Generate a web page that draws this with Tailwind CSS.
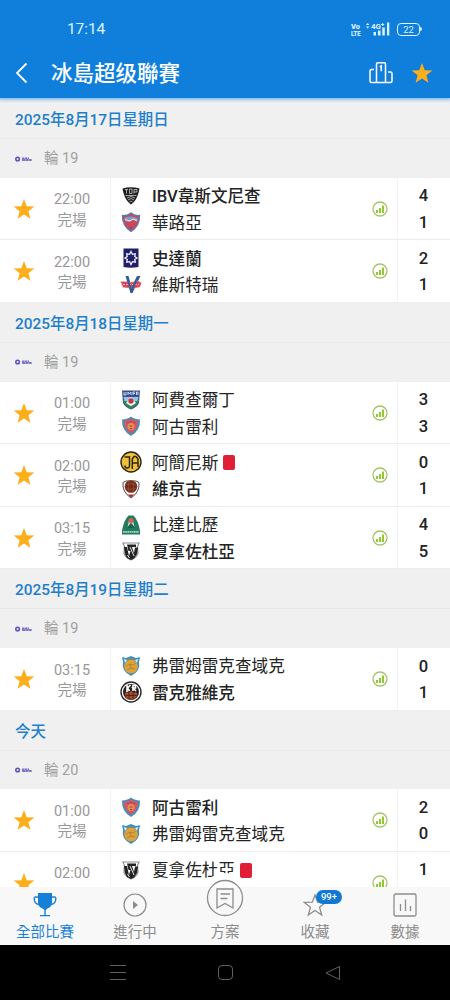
<!DOCTYPE html>
<html lang="zh-Hant">
<head>
    <meta charset="UTF-8">
    <meta name="viewport" content="width=device-width, initial-scale=1.0">
    <title>冰島超级聯賽</title>
    <script src="https://cdn.jsdelivr.net/npm/@tailwindcss/browser@4"></script>
    <style>
        body {
            font-family: Roboto, "Noto Sans CJK SC", sans-serif;
        }
    </style>
</head>
<body class="bg-black">

    <!-- Shared icons and club badges -->
    <svg class="hidden" xmlns="http://www.w3.org/2000/svg">
        <symbol id="star" viewBox="0 0 24 24"><path fill="#fcae1b" d="M12 1l3 7.900 8.300.4-6.500 5.200 2.200 8.100-7-4.600-7 4.600 2.200-8.100L.7 9.300 9 8.900z"/></symbol>
        <symbol id="stats" viewBox="0 0 16 16">
            <circle cx="8" cy="8" r="7" fill="none" stroke="#a3c567" stroke-width="1.300"/>
            <path fill="#8fca32" d="M4 9h2v3H4zM7 7h2v5H7zM10 4.500h2V12h-2z"/>
        </symbol>
        <symbol id="league" viewBox="0 0 17 6">
            <circle cx="2.600" cy="3" r="1.800" fill="none" stroke="#5a4fc0" stroke-width="1.500"/>
            <path stroke="#7d77cb" stroke-width="1.500" stroke-dasharray="2.500 .4" d="M7 2.200h7"/>
            <path stroke="#5a4fc0" stroke-width="1.500" stroke-dasharray="3 .3" d="M7 4h10"/>
        </symbol>
        <symbol id="ibv" viewBox="0 0 22 22">
            <path fill="#1f1f1f" d="M2.500 3.500Q11 1 19.500 3.500q-.5 4-2 7.500Q15 17 11 19.500 7 17 4.500 11q-1.500-3.500-2-7.500z"/>
            <path stroke="#ccc" fill="none" stroke-width=".8" d="M5 4.500h3M6.500 4.500v4M9.500 4v4.500h2.500V4zM14 8.500v-4h3v2.500h-3M5.500 10.500h11M7 13l4-1.500 4 1.500M8 15l3-1.500 3 1.500M9.500 17l1.500-1 1.500 1"/>
        </symbol>
        <symbol id="hualu" viewBox="0 0 22 22">
            <path fill="#d64352" stroke="#5d7ba6" stroke-width="1.300" d="M2.500 4.500Q8 5 11 2q3 3 8.500 2.500.5 10-8.500 16Q2 14.500 2.500 4.500z"/>
            <path fill="#6f9fcd" d="M4 7q7-3 14 .5l-1 3.500-4-2-4 2-4-1z"/>
            <path fill="none" stroke="#f3e4e8" d="M5 8.500l5 1.500 3-2 4 1.500"/>
            <path fill="#4b639b" d="M9 16h4l-2 3z"/>
        </symbol>
        <symbol id="stjarnan" viewBox="0 0 22 22">
            <path fill="#201f68" d="M3.500 1.500h15V20q-7.500 1.500-15 0z"/>
            <path fill="none" stroke="#eef" stroke-width="1.300" d="M11 4.500l1.400 2.800 2.900-.5-.6 2.700L17 11l-2.300 1.500.6 2.700-2.900-.5L11 17.500l-1.400-2.800-2.900.5.6-2.700L5 11l2.300-1.500-.6-2.700 2.900.5z"/>
        </symbol>
        <symbol id="vestri" viewBox="0 0 22 22">
            <path fill="#2d5e96" d="M5.500 2h3l3 11L17 2h3.500l-8 17h-2z"/>
            <path fill="#d8495b" stroke="#f0c4cb" stroke-width=".5" d="M.5 7.500h6l2 1 10-1.500 3 2-1.500 4-6 1.500-6-.5-5-.5z"/>
            <path stroke="#f3ccd3" stroke-width=".8" stroke-dasharray="2 1" d="M3 10.500h16"/>
            <path stroke="#2d5e96" stroke-width="2" fill="none" d="M8 7l3.500 10L16 7"/>
        </symbol>
        <symbol id="umfa" viewBox="0 0 22 22">
            <path fill="#35508d" d="M2 1.500h18L19 14q-2 4-8 6.500Q5 18 3 14z"/>
            <path fill="#318a53" d="M3 11h16q-.5 5-8 9-7.500-4-8-9z"/>
            <path fill="#95c5ea" d="M3.500 8h15l-1 4h-13z"/>
            <path fill="#fff" d="M6 14l5-6 5 6-5 3z"/>
            <circle cx="11" cy="12" r="2.700" fill="#bd3843"/>
            <path stroke="#dce4f3" fill="none" stroke-width=".9" d="M4 3v3h2V3M8 6V3l1.500 2L11 3v3M13 6V3h2M13 4.500h2M16.500 6V3H18v3"/>
        </symbol>
        <symbol id="akureyri" viewBox="0 0 22 22">
            <path fill="#478fb4" d="M2 4.500Q8 4 11 1.500 14 4 20 4.500q.5 11-9 16.500Q1.500 15.500 2 4.500z"/>
            <path fill="#d95563" d="M4 6q4.500-.5 7-2.500Q13.500 5.500 18 6q0 8-7 12.500Q4 14 4 6z"/>
            <circle cx="11" cy="11.500" r="3.500" fill="#e88e46"/>
            <path fill="none" stroke="#7c4775" stroke-width=".9" d="M7 7.500h2M10 6.500h2M13 7.500h2M9.500 11h3M10 13.500h2"/>
        </symbol>
        <symbol id="ia" viewBox="0 0 22 22">
            <circle cx="11" cy="11" r="10" fill="#f0c03a" stroke="#272314" stroke-width="1.400"/>
            <path fill="none" stroke="#2c2714" stroke-width="1.500" d="M4.500 6h5V15q-.3 2-2.300 2t-2.500-2.500M12.300 18V8l1.700-2.500h2L18 8v8M12 12h6"/>
        </symbol>
        <symbol id="vikingur" viewBox="0 0 22 22">
            <path fill="#fff" stroke="#524a4b" d="M3 4.500Q2 14 11 20q9-6 8-15.500L16 3H6z"/>
            <path fill="#a52f36" d="M4 13l7 6.500 7-6.500-4 3.500H8z"/>
            <circle cx="11" cy="8.500" r="6.300" fill="#6e2c20"/>
            <path fill="none" stroke="#a34a29" stroke-width=".8" d="M5 7q6-2.500 12 0M5 10q6 2.500 12 0M9 2.500q-1 6 0 12M13 2.500q1 6 0 12"/>
        </symbol>
        <symbol id="breidablik" viewBox="0 0 22 22">
            <path fill="#237b60" d="M2 20.500v-4Q4 6 8.500 1.500h5Q18 6 20 16.500v4z"/>
            <path fill="#c5d5c8" d="M7.500 13.500L9 6q2-2.500 4 0l1.500 7.500L11 9z"/>
            <circle cx="11" cy="6.500" r="2.500" fill="#d95f5a"/>
            <path fill="#15654b" d="M7 14l4-5 4 5z"/>
            <path fill="none" stroke="#b4d6c8" stroke-width="1.800" stroke-dasharray="1.700 .5" d="M3 17.800h16"/>
        </symbol>
        <symbol id="fh" viewBox="0 0 22 22">
            <path fill="#fff" stroke="#8e8e8e" stroke-width="1.200" d="M3 3h16l-1.500 3.500.5 7q-2 4.500-7 6.500-5-2-7-6.500l.5-7z"/>
            <path fill="#222" d="M4 7h3l2 9 1.500-5H8.500L7 4.500h9V7h-4l2 6 1-5.500h3L17 14l-3 4.500-3 1.500-4-2-2-4z"/>
            <path fill="none" stroke="#fff" stroke-width=".9" d="M10 7l4 9M7.500 15l2 3"/>
        </symbol>
        <symbol id="fram" viewBox="0 0 22 22">
            <path fill="#3b91c4" d="M2 2l4 1 5-2 5 2 4-1-1 5q2 9-8 14Q1 16 3 7z"/>
            <path fill="#e7f0ef" d="M4 4l3 1-2 3zM18 4l-3 1 2 3z"/>
            <ellipse cx="11" cy="11.500" rx="6.800" ry="7" fill="#dda239"/>
            <path fill="none" stroke="#a87c34" stroke-width=".8" d="M8 5q3-3 6 0M6 11l4-2 3 1 3-2M7 15l4-2 4 1M10 9l1 4"/>
        </symbol>
        <symbol id="kr" viewBox="0 0 22 22">
            <circle cx="11" cy="11" r="10" fill="#fff" stroke="#292526" stroke-width="1.400"/>
            <circle cx="11" cy="11" r="8" fill="#262223"/>
            <path fill="none" stroke="#fff" stroke-width="1.600" d="M7 4v7M10.500 4L7.500 7l2 3M13 10V4.500h2.500V7H13l3 3"/>
            <path fill="#a94b2a" d="M5 12q2-2 3 0l3-2 3 2q2-2 3 0v2q-1 4-6 4.500Q6 18 5 14z"/>
            <path stroke="#4a241d" d="M5.500 14.500h11M9 12v6M13 12v6"/>
        </symbol>
    </svg>

    <div class="w-[450px] h-[1000px] flex flex-col overflow-hidden bg-white">

        <!-- Header -->
        <header class="h-[98px] shrink-0 bg-[#107fdc] text-white relative z-10 shadow-[0_1px_3px_1px_#82bdf0]">
            <div class="flex items-center justify-between h-[56px] pl-[67px] pr-[28px] text-[#d9f3ff]">
                <span class="text-[15.500px] tracking-[-0.100px] pt-[3px]">17:14</span>
                <div class="flex items-center pt-[2px]">
                    <svg class="w-[10px] h-[14px] mr-[5px] overflow-visible" viewBox="0 0 10 14" fill="currentColor" font-size="8" font-weight="900">
                        <text x="0" y="6.500" textLength="9" lengthAdjust="spacingAndGlyphs">Vo</text>
                        <text x="0" y="13.500" textLength="9.500" lengthAdjust="spacingAndGlyphs">LTE</text>
                    </svg>
                    <svg class="w-[24px] h-[14px] mr-[7px] overflow-visible" viewBox="0 0 24 14" fill="currentColor">
                        <path d="M0 3l1.700-2L3.400 3zM0 4.500h3.400l-1.700 2z"/>
                        <text x="5" y="6.500" font-size="8" font-weight="700" textLength="10">4G</text>
                        <path d="M15.200 2h3v1h-3zM16.200 1h1v3h-1zM7.500 10H10v3.500H7.500zM12 8.500h2.500v5H12zM16.300 5.500h2.500v8h-2.500zM21 .5h2.300v13H21z"/>
                    </svg>
                    <div class="w-[23px] h-[13px] rounded-[4px] border-[1.500px] border-current text-[9.500px] leading-[11px] text-center">22</div>
                    <div class="w-[2px] h-[4px] rounded-r bg-current"></div>
                </div>
            </div>
            <div class="flex items-center h-[34px] px-[15px]">
                <svg class="w-[13px] h-[22px]" viewBox="0 0 13 22" fill="none" stroke="currentColor" stroke-width="1.800"><path d="M11.500 1.500L2 11l9.500 9.500"/></svg>
                <h1 class="ml-[23px] pt-[2px] text-[21.500px] leading-[34px] font-medium">冰島超级聯賽</h1>
                <svg class="w-[24px] h-[22px] ml-auto mr-[18px]" viewBox="0 0 24 22" fill="none" stroke="currentColor" stroke-width="1.500">
                    <path d="M7.500 20.500V2Q7.500.8 8.700.8h6.600q1.200 0 1.200 1.200v18.500M5 7.500H2.500Q1 7.500 1 9v10q0 1.500 1.500 1.500h19q1.500 0 1.500-1.500v-7.500q0-1.500-1.500-1.500H19M10.800 4.800l1.500-1v5.500"/>
                </svg>
                <svg class="w-[22px] h-[22px] mr-[2px]"><use href="#star"/></svg>
            </div>
        </header>

        <!-- Match list -->
        <main id="matchList" class="flex-1 min-h-0 overflow-hidden pt-[1.200px] bg-[#f0f0f0]"></main>

        <!-- Tab bar -->
        <nav class="h-[58px] shrink-0 grid grid-cols-5 bg-[#f8f8f8] text-[#8c8c8c] text-[14.500px] leading-[20px] relative">
            <div class="flex flex-col items-center text-[#1680d8]">
                <svg class="w-[24px] h-[26px] mt-[5px] mb-[5px]" viewBox="0 0 24 26">
                    <path fill="currentColor" d="M5 1h14v9q0 5-4.500 6.500L12.700 18V23H17v1.300H7V23h4.300v-5l-1.800-1.500Q5 15 5 10z"/>
                    <path fill="none" stroke="currentColor" stroke-width="1.400" d="M5 5H2.500Q1 5 1.200 6.500q0 5.500 4.800 6M19 5h2.500Q23 5 22.800 6.500q0 5.500-4.800 6"/>
                </svg>
                <span>全部比賽</span>
            </div>
            <div class="flex flex-col items-center">
                <svg class="w-[24px] h-[24px] mt-[6px] mb-[6px]" viewBox="0 0 24 24"><circle cx="12" cy="12" r="11" fill="none" stroke="currentColor" stroke-width="1.200"/><path fill="currentColor" d="M10 8l5 4-5 4z"/></svg>
                <span>進行中</span>
            </div>
            <div class="flex flex-col items-center relative">
                <div class="absolute -top-[14px] w-[52px] h-[52px] rounded-full bg-white [clip-path:inset(0_0_38px_0)]"></div>
                <svg class="w-[38px] h-[38px] -mt-[8px] mb-[6px] relative" viewBox="0 0 38 38" fill="none" stroke="currentColor" stroke-width="1.300">
                    <circle cx="19" cy="19" r="17.500"/>
                    <path d="M11 10h16v19l-8-4.500-8 4.500zM14.500 15h9.500M14.500 19.500h7"/>
                </svg>
                <span class="relative">方案</span>
            </div>
            <div class="flex flex-col items-center relative">
                <svg class="w-[24px] h-[24px] mt-[6px] mb-[6px]" viewBox="0 0 24 24" fill="none" stroke="currentColor" stroke-width="1.300"><path d="M12 2l2.700 7.200 8 .2-6.200 4.900 2.200 7.700-6.700-4.500L5.300 22l2.200-7.700-6.200-4.900 8-.2z"/></svg>
                <span>收藏</span>
                <div class="absolute left-[46px] top-[3px] w-[26px] h-[14px] rounded-full bg-[#1179d2] text-white text-[9.500px] leading-[14px] font-medium text-center">99+</div>
            </div>
            <div class="flex flex-col items-center">
                <svg class="w-[24px] h-[24px] mt-[6px] mb-[6px]" viewBox="0 0 24 24" fill="none" stroke="currentColor" stroke-width="1.300"><rect x="1" y="1" width="22" height="22" rx="1.500"/><path d="M7.500 11v7M12.500 6.500V18M17.500 13v5"/></svg>
                <span>數據</span>
            </div>
        </nav>

        <!-- Android navigation keys -->
        <footer class="h-[55px] shrink-0 bg-black flex items-center text-[#606060]">
            <svg class="w-[16px] h-[16px] ml-[109.500px]" viewBox="0 0 16 16" stroke="currentColor"><path d="M0 .5h16M0 7.500h16M0 14.500h16"/></svg>
            <div class="w-[15px] h-[15px] ml-[92px] rounded-[4px] border border-current"></div>
            <svg class="w-[16px] h-[16px] ml-[92px]" viewBox="0 0 16 16" fill="none" stroke="currentColor" stroke-linejoin="round"><path d="M14.500 1.500v13L1 8z"/></svg>
        </footer>
    </div>

    <script>
        // team: [badge, name, score, bold, red card]
        const days = [
            { date: '2025年8月17日星期日', round: '輪 19', matches: [
                { time: '22:00', status: '完場', teams: [['ibv', 'IBV韋斯文尼查', 4, true], ['hualu', '華路亞', 1]] },
                { time: '22:00', status: '完場', teams: [['stjarnan', '史達蘭', 2, true], ['vestri', '維斯特瑞', 1]] },
            ]},
            { date: '2025年8月18日星期一', round: '輪 19', matches: [
                { time: '01:00', status: '完場', teams: [['umfa', '阿費查爾丁', 3], ['akureyri', '阿古雷利', 3]] },
                { time: '02:00', status: '完場', teams: [['ia', '阿簡尼斯', 0, false, true], ['vikingur', '維京古', 1, true]] },
                { time: '03:15', status: '完場', teams: [['breidablik', '比達比歷', 4], ['fh', '夏拿佐杜亞', 5, true]] },
            ]},
            { date: '2025年8月19日星期二', round: '輪 19', matches: [
                { time: '03:15', status: '完場', teams: [['fram', '弗雷姆雷克查域克', 0], ['kr', '雷克雅維克', 1, true]] },
            ]},
            { date: '今天', round: '輪 20', matches: [
                { time: '01:00', status: '完場', teams: [['akureyri', '阿古雷利', 2, true], ['fram', '弗雷姆雷克查域克', 0]] },
                { time: '02:00', status: '', teams: [['fh', '夏拿佐杜亞', 1, false, true]] },
            ]},
        ];

        const teamRow = ([badge, name, , bold, red]) => `
            <div class="flex items-center h-[26.500px]">
                <svg class="w-[22px] h-[22px] mr-[10px] -mt-[3px]"><use href="#${badge}"/></svg>
                <span class="${bold ? 'font-medium' : 'font-normal'} text-[16.600px] leading-[26px] text-[#242424]">${name}</span>
                ${red ? '<span class="w-[12px] h-[15px] ml-[5px] -mt-[2px] rounded-[2px] bg-[#df1f35]"></span>' : ''}
            </div>`;

        const matchRow = m => `
            <div class="flex h-[62.500px] bg-white border-b border-[#ededed]">
                <div class="w-[48px] flex items-center justify-center"><svg class="w-[22px] h-[22px]"><use href="#star"/></svg></div>
                <div class="w-[63px] pr-[14px] pt-[12.500px] text-center text-[14.500px] leading-[20.500px] text-[#989898] border-r border-[#f2f2f2]">
                    <div>${m.time}</div>
                    <div>${m.status}</div>
                </div>
                <div class="w-[252px] pl-[9px] pt-[6px]">${m.teams.map(teamRow).join('')}</div>
                <div class="w-[35px] pl-[9px] flex items-center border-r border-[#f2f2f2]"><svg class="w-[16px] h-[16px]"><use href="#stats"/></svg></div>
                <div class="flex-1 pt-[5.500px] pr-px text-center text-[16.600px] leading-[26.500px] font-medium text-[#222]">
                    ${m.teams.map(t => `<div>${t[2]}</div>`).join('')}
                </div>
            </div>`;

        document.getElementById('matchList').innerHTML = days.map(d => `
            <section>
                <h2 class="h-[40px] pt-[1px] pl-[15px] border-b border-[#e9e9e9] text-[15.400px] leading-[40px] font-medium text-[#1d7fcc]">${d.date}</h2>
                <div class="flex items-center h-[38.800px] pt-[1px] pl-[15px] text-[14.500px] text-[#a0a0a0]">
                    <svg class="w-[17px] h-[6px] mr-[12px] -mt-[1px]"><use href="#league"/></svg>${d.round}
                </div>
                ${d.matches.map(matchRow).join('')}
            </section>`).join('');
    </script>
</body>
</html>
